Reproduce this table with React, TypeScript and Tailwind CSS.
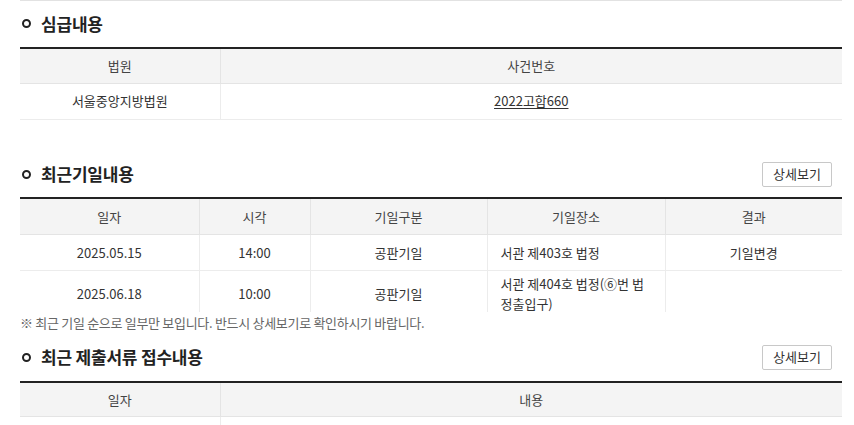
import React from "react";

const font = { fontFamily: '"Noto Sans CJK KR", "Noto Sans", sans-serif' };

function SectionTitle({ title, more }: { title: string; more?: boolean }) {
  return (
    <div className="flex h-[25px] items-center justify-between">
      <h2 className="flex items-center text-[17px] font-bold tracking-[-0.2px] text-[#222]">
        <span className="mr-[10px] ml-[2px] inline-block h-[9px] w-[9px] rounded-full border-2 border-[#222]" />
        {title}
      </h2>
      {more && (
        <button className="mr-[10px] h-[25px] w-[70px] rounded-[2px] border border-[#c8c8c8] bg-white text-[13px] text-[#333]">
          상세보기
        </button>
      )}
    </div>
  );
}

const th = "h-[35px] border-b border-l border-[#e4e4e4] bg-[#f4f4f4] text-center text-[13px] font-normal text-[#444] first:border-l-0";
const td = "h-[36px] border-b border-l border-[#ececec] text-center text-[13px] text-[#333] first:border-l-0";

export default function App() {
  const hearings = [
    { date: "2025.05.15", time: "14:00", kind: "공판기일", place: "서관 제403호 법정", result: "기일변경" },
    { date: "2025.06.18", time: "10:00", kind: "공판기일", place: "서관 제404호 법정(⑥번 법정출입구)", result: "" },
  ];

  return (
    <div className="h-[425px] w-[854px] overflow-hidden bg-white pr-[12px] pl-[20px]" style={font}>
      <div className="border-t border-[#e2e2e2]" />

      {/* 심급내용 */}
      <div className="mt-[10px] mb-[11px]">
        <SectionTitle title="심급내용" />
      </div>
      <table className="w-full table-fixed border-collapse border-t-2 border-[#222]">
        <colgroup>
          <col className="w-[200px]" />
          <col />
        </colgroup>
        <thead>
          <tr>
            <th className={th}>법원</th>
            <th className={th}>사건번호</th>
          </tr>
        </thead>
        <tbody>
          <tr>
            <td className={td}>서울중앙지방법원</td>
            <td className={td}>
              <span className="underline underline-offset-2">2022고합660</span>
            </td>
          </tr>
        </tbody>
      </table>

      {/* 최근기일내용 */}
      <div className="mt-[42px] mb-[10px]">
        <SectionTitle title="최근기일내용" more />
      </div>
      <div className="h-[115px] overflow-hidden">
        <table className="w-full table-fixed border-collapse border-t-2 border-[#222]">
          <colgroup>
            <col className="w-[179px]" />
            <col className="w-[111px]" />
            <col className="w-[177px]" />
            <col className="w-[178px]" />
            <col />
          </colgroup>
          <thead>
            <tr>
              <th className={`${th} h-[37px]`}>일자</th>
              <th className={`${th} h-[37px]`}>시각</th>
              <th className={`${th} h-[37px]`}>기일구분</th>
              <th className={`${th} h-[37px]`}>기일장소</th>
              <th className={`${th} h-[37px]`}>결과</th>
            </tr>
          </thead>
          <tbody>
            {hearings.map((h) => (
              <tr key={h.date}>
                <td className={td}>{h.date}</td>
                <td className={td}>{h.time}</td>
                <td className={td}>{h.kind}</td>
                <td className={`${td} px-[13px] py-[3px] text-left leading-[20px]`}>{h.place}</td>
                <td className={td}>{h.result}</td>
              </tr>
            ))}
          </tbody>
        </table>
      </div>
      <p className="h-[21px] text-[13px] leading-[21px] tracking-[-0.3px] text-[#666]">
        ※ 최근 기일 순으로 일부만 보입니다. 반드시 상세보기로 확인하시기 바랍니다.
      </p>

      {/* 최근 제출서류 접수내용 */}
      <div className="mt-[12px] mb-[11px]">
        <SectionTitle title="최근 제출서류 접수내용" more />
      </div>
      <table className="w-full table-fixed border-collapse border-t-2 border-[#222]">
        <colgroup>
          <col className="w-[200px]" />
          <col />
        </colgroup>
        <thead>
          <tr>
            <th className={th}>일자</th>
            <th className={th}>내용</th>
          </tr>
        </thead>
        <tbody>
          <tr>
            <td className={td}>&nbsp;</td>
            <td className={td}>&nbsp;</td>
          </tr>
        </tbody>
      </table>
    </div>
  );
}
